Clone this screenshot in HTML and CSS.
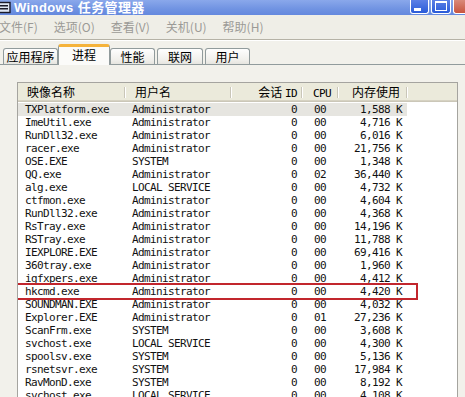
FILE: index.html
```html
<!DOCTYPE html>
<html lang="zh-CN">
<head>
<meta charset="utf-8">
<title>Windows 任务管理器</title>
<link rel="stylesheet" href="styles.css">
</head>
<body>
<div class="window">
  <div class="titlebar">
    <svg class="appicon" width="11" height="13" viewBox="0 0 11 13">
      <rect x="-2" y="1.5" width="12" height="10" fill="#dfe6f3" stroke="#1b1b2a" stroke-width="1.4"/>
      <rect x="0" y="4" width="8" height="1.5" fill="#1b1b2a"/>
      <rect x="0" y="7" width="8" height="1.5" fill="#1b1b2a"/>
    </svg>
    <span class="title">Windows 任务管理器</span>
    <div class="caption-buttons">
      <span class="cbtn cbtn-min"><span class="min-bar"></span></span>
      <span class="cbtn cbtn-max"><span class="max-box"></span></span>
      <span class="cbtn cbtn-close"></span>
    </div>
  </div>
  <div class="menubar">
    <span class="menu">文件(<u>F</u>)</span>
    <span class="menu">选项(<u>O</u>)</span>
    <span class="menu">查看(<u>V</u>)</span>
    <span class="menu">关机(<u>U</u>)</span>
    <span class="menu">帮助(<u>H</u>)</span>
  </div>
  <div class="tabstrip">
    <span class="tab tab-apps">应用程序</span>
    <span class="tab tab-proc selected">进程</span>
    <span class="tab tab-perf">性能</span>
    <span class="tab tab-net">联网</span>
    <span class="tab tab-user">用户</span>
  </div>
  <div class="panel">
    <div class="list">
      <div class="header">
        <div class="hcell h-name">映像名称</div>
        <div class="hcell h-user">用户名</div>
        <div class="hcell h-sess">会话 <span class="mono">ID</span></div>
        <div class="hcell h-cpu"><span class="mono">CPU</span></div>
        <div class="hcell h-mem">内存使用</div>
        <div class="hcell h-fill"></div>
      </div>
      <div class="rows">
        <div class="row sel"><span class="c-name">TXPlatform.exe</span><span class="c-user">Administrator</span><span class="c-sess">0</span><span class="c-cpu">00</span><span class="c-mem">1,588 K</span></div>
        <div class="row"><span class="c-name">ImeUtil.exe</span><span class="c-user">Administrator</span><span class="c-sess">0</span><span class="c-cpu">00</span><span class="c-mem">4,716 K</span></div>
        <div class="row"><span class="c-name">RunDll32.exe</span><span class="c-user">Administrator</span><span class="c-sess">0</span><span class="c-cpu">00</span><span class="c-mem">6,016 K</span></div>
        <div class="row"><span class="c-name">racer.exe</span><span class="c-user">Administrator</span><span class="c-sess">0</span><span class="c-cpu">00</span><span class="c-mem">21,756 K</span></div>
        <div class="row"><span class="c-name">OSE.EXE</span><span class="c-user">SYSTEM</span><span class="c-sess">0</span><span class="c-cpu">00</span><span class="c-mem">1,348 K</span></div>
        <div class="row"><span class="c-name">QQ.exe</span><span class="c-user">Administrator</span><span class="c-sess">0</span><span class="c-cpu">02</span><span class="c-mem">36,440 K</span></div>
        <div class="row"><span class="c-name">alg.exe</span><span class="c-user">LOCAL SERVICE</span><span class="c-sess">0</span><span class="c-cpu">00</span><span class="c-mem">4,732 K</span></div>
        <div class="row"><span class="c-name">ctfmon.exe</span><span class="c-user">Administrator</span><span class="c-sess">0</span><span class="c-cpu">00</span><span class="c-mem">4,604 K</span></div>
        <div class="row"><span class="c-name">RunDll32.exe</span><span class="c-user">Administrator</span><span class="c-sess">0</span><span class="c-cpu">00</span><span class="c-mem">4,368 K</span></div>
        <div class="row"><span class="c-name">RsTray.exe</span><span class="c-user">Administrator</span><span class="c-sess">0</span><span class="c-cpu">00</span><span class="c-mem">14,196 K</span></div>
        <div class="row"><span class="c-name">RSTray.exe</span><span class="c-user">Administrator</span><span class="c-sess">0</span><span class="c-cpu">00</span><span class="c-mem">11,788 K</span></div>
        <div class="row"><span class="c-name">IEXPLORE.EXE</span><span class="c-user">Administrator</span><span class="c-sess">0</span><span class="c-cpu">00</span><span class="c-mem">69,416 K</span></div>
        <div class="row"><span class="c-name">360tray.exe</span><span class="c-user">Administrator</span><span class="c-sess">0</span><span class="c-cpu">00</span><span class="c-mem">1,960 K</span></div>
        <div class="row"><span class="c-name">igfxpers.exe</span><span class="c-user">Administrator</span><span class="c-sess">0</span><span class="c-cpu">00</span><span class="c-mem">4,412 K</span></div>
        <div class="row marked"><span class="c-name">hkcmd.exe</span><span class="c-user">Administrator</span><span class="c-sess">0</span><span class="c-cpu">00</span><span class="c-mem">4,420 K</span><span class="highlight-box"></span></div>
        <div class="row"><span class="c-name">SOUNDMAN.EXE</span><span class="c-user">Administrator</span><span class="c-sess">0</span><span class="c-cpu">00</span><span class="c-mem">4,032 K</span></div>
        <div class="row"><span class="c-name">Explorer.EXE</span><span class="c-user">Administrator</span><span class="c-sess">0</span><span class="c-cpu">01</span><span class="c-mem">27,236 K</span></div>
        <div class="row"><span class="c-name">ScanFrm.exe</span><span class="c-user">SYSTEM</span><span class="c-sess">0</span><span class="c-cpu">00</span><span class="c-mem">3,608 K</span></div>
        <div class="row"><span class="c-name">svchost.exe</span><span class="c-user">LOCAL SERVICE</span><span class="c-sess">0</span><span class="c-cpu">00</span><span class="c-mem">4,300 K</span></div>
        <div class="row"><span class="c-name">spoolsv.exe</span><span class="c-user">SYSTEM</span><span class="c-sess">0</span><span class="c-cpu">00</span><span class="c-mem">5,136 K</span></div>
        <div class="row"><span class="c-name">rsnetsvr.exe</span><span class="c-user">SYSTEM</span><span class="c-sess">0</span><span class="c-cpu">00</span><span class="c-mem">17,984 K</span></div>
        <div class="row"><span class="c-name">RavMonD.exe</span><span class="c-user">SYSTEM</span><span class="c-sess">0</span><span class="c-cpu">00</span><span class="c-mem">8,192 K</span></div>
        <div class="row"><span class="c-name">svchost.exe</span><span class="c-user">LOCAL SERVICE</span><span class="c-sess">0</span><span class="c-cpu">00</span><span class="c-mem">4,108 K</span></div>
      </div>
    </div>
  </div>
</div>
</body>
</html>
```
FILE: styles.css
```css
html, body {
  margin: 0;
  padding: 0;
  width: 465px;
  height: 397px;
  overflow: hidden;
  background: #f2f1eb;
}

.window {
  width: 465px;
  height: 397px;
  display: flex;
  flex-direction: column;
  font-family: "Noto Sans CJK SC", "Liberation Sans", sans-serif;
  font-size: 12px;
  color: #000;
}

/* ---------- title bar ---------- */
.titlebar {
  height: 15px;
  flex: none;
  display: flex;
  align-items: center;
  background: linear-gradient(#8aa8eb, #7093e2 60%, #6488de);
  position: relative;
}
.appicon {
  flex: none;
  margin-left: 0;
}
.title {
  margin-left: 3px;
  color: #fff;
  font-family: "Liberation Sans", "Noto Sans CJK SC", sans-serif;
  font-weight: bold;
  font-size: 13px;
  line-height: 15px;
  letter-spacing: 0.4px;
}
.caption-buttons {
  margin-left: auto;
  display: flex;
  gap: 2px;
  align-self: stretch;
}
.cbtn {
  width: 19px;
  height: 14px;
  border: 1px solid #fff;
  border-top: none;
  border-radius: 0 0 3px 3px;
  background: linear-gradient(#5c80e6, #2a5bd8);
  box-sizing: border-box;
  position: relative;
}
.cbtn-min { width: 19px; }
.cbtn-max { width: 20px; }
.cbtn-close {
  width: 12px;
  border-right: none;
  border-radius: 0 0 0 3px;
  background: linear-gradient(#d98a7a, #c8553f);
}
.min-bar {
  position: absolute;
  left: 3px;
  bottom: 2px;
  width: 7px;
  height: 3px;
  background: #fff;
}
.max-box {
  position: absolute;
  left: 3px;
  top: 1px;
  width: 12px;
  height: 10px;
  box-sizing: border-box;
  border: 1px solid #fff;
  border-top-width: 2px;
}

/* ---------- menu bar ---------- */
.menubar {
  height: 24px;
  flex: none;
  display: flex;
  align-items: center;
  background: #efeee7;
  border-bottom: 1px solid #b5b2a6;
  box-shadow: 0 1px 0 #fff;
}
.menu {
  color: #9b9a96;
  font-size: 12px;
  line-height: 14px;
  margin-right: 16px;
  white-space: nowrap;
}
.menu u { text-decoration: none; }
.menu:first-child { margin-left: -1px; }

/* ---------- tabs ---------- */
.tabstrip {
  height: 21px;
  flex: none;
  margin-top: 3px;
  padding-left: 3px;
  display: flex;
  align-items: flex-end;
  border-bottom: 1px solid #919b9c;
  background: #f2f1eb;
}
.tab {
  height: 16px;
  box-sizing: border-box;
  border: 1px solid #919b9c;
  border-bottom: none;
  border-radius: 3px 3px 0 0;
  background: linear-gradient(#fefefe, #f1f0ec 70%, #e6e5df);
  display: flex;
  align-items: center;
  justify-content: center;
  font-size: 12px;
  line-height: 14px;
  padding-top: 1px;
}
.tab-apps { width: 55px; }
.tab-proc { width: 52px; }
.tab-perf { width: 45px; margin-right: 2px; }
.tab-net { width: 46px; margin-right: 2px; }
.tab-user { width: 45px; }
.tab.selected {
  height: 21px;
  margin-bottom: -1px;
  border-top: 3px solid #f5b33b;
  background: #fbfbf9;
  align-items: flex-start;
  padding-top: 1px;
}

/* ---------- panel & list ---------- */
.panel {
  flex: 1;
  padding: 17px 7px 0 17px;
  background: #f2f1eb;
  min-height: 0;
}
.list {
  height: 100%;
  background: #fff;
  border: 1px solid #a5a49f;
  border-bottom: none;
  overflow: hidden;
}
.header,
.row {
  display: grid;
  grid-template-columns: 107px 106px 71px 36px 69px 1fr;
}
.header {
  height: 19px;
  background: #ebeadb;
  box-shadow: inset 0 -1px 0 #cbc7b8, inset 0 -2px 0 #d6d2c2;
}
.hcell {
  font-size: 12px;
  line-height: 18px;
  white-space: nowrap;
  position: relative;
}
.hcell:not(.h-fill)::after {
  content: "";
  position: absolute;
  right: 0;
  top: 4px;
  width: 1px;
  height: 11px;
  background: #c9c6b8;
  box-shadow: 1px 0 0 #fff;
}
.mono {
  font-family: "DejaVu Sans Mono", monospace;
  font-size: 11px;
  letter-spacing: -0.62px;
}
.h-name { padding-left: 9px; }
.h-user { padding-left: 10px; }
.h-sess { text-align: right; padding-right: 5px; }
.h-cpu { padding-left: 11px; }
.h-mem { text-align: right; padding-right: 7px; }

.rows {
  padding-top: 1px;
}
.row {
  height: 13px;
  font-family: "DejaVu Sans Mono", monospace;
  font-size: 11px;
  line-height: 13px;
  letter-spacing: -0.62px;
  white-space: nowrap;
  position: relative;
  color: #111;
}
.row > span {
  display: block;
  height: 13px;
  overflow: hidden;
}
.row.sel > span:not(.highlight-box) {
  background: #e6e5e0;
}
.c-name { padding-left: 7px; }
.c-user { padding-left: 7px; }
.c-sess { text-align: right; padding-right: 5px; }
.c-cpu { padding-left: 12px; }
.c-mem { text-align: right; padding-right: 5px; }

/* red annotation drawn over the hkcmd row */
.row > .highlight-box {
  position: absolute;
  left: -3px;
  top: -2px;
  width: 403px;
  height: 17px;
  box-sizing: border-box;
  border: 2px solid #c2262d;
  pointer-events: none;
  overflow: visible;
}
```
